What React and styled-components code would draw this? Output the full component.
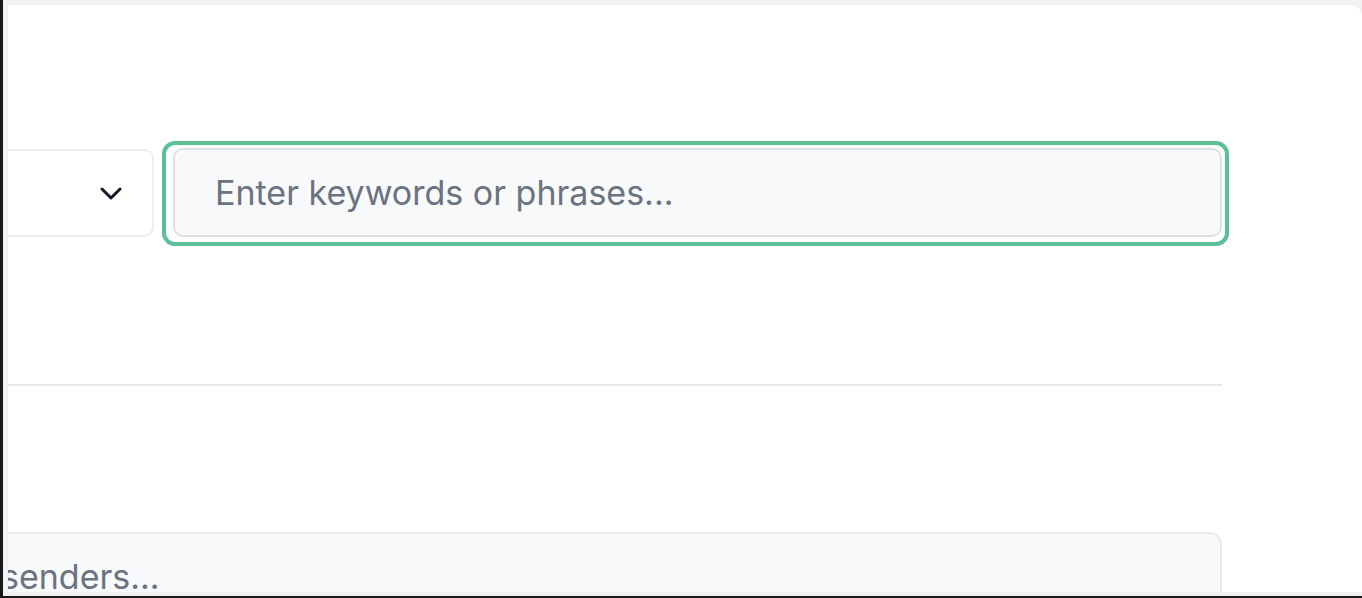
import React from "react";
import styled, { createGlobalStyle } from "styled-components";

const Global = createGlobalStyle`
  html, body { margin: 0; padding: 0; background: #181818; }
  body { font-family: Inter, "Noto Sans", Arial, sans-serif; }
  * { box-sizing: border-box; }
`;

const Root = styled.div`
  width: 1362px;
  height: 598px;
  background: #181818;
  padding: 0 0 2px 3px;
  display: flex;
`;

const Frame = styled.div`
  flex: 1;
  background: #f1f2f4;
  padding: 5px 0 4px 5px;
  display: flex;
`;

const Card = styled.div`
  flex: 1;
  background: #ffffff;
  border-top-right-radius: 12px;
  overflow: hidden;
  padding: 136px 140px 0 0;
`;

const Column = styled.div`
  margin-left: -130px;
  display: flex;
  flex-direction: column;
`;

const FilterRow = styled.div`
  display: flex;
  align-items: flex-start;
`;

const Select = styled.div`
  flex: 0 0 276px;
  height: 88px;
  margin-top: 8px;
  background: #ffffff;
  border: 2px solid #eceef1;
  border-radius: 10px;
  display: flex;
  align-items: center;
  justify-content: flex-end;
  padding-right: 30px;
  color: #111827;
`;

const FocusRing = styled.div`
  flex: 1;
  margin: 0 -7px 0 8px;
  border: 4px solid #5cc096;
  border-radius: 13px;
  padding: 3px 3px 5px 7px;
  display: flex;
`;

const TextInput = styled.input`
  flex: 1;
  min-width: 0;
  height: ${(p) => p.$h}px;
  background: #f8f9fb;
  border: 2px solid ${(p) => p.$border};
  border-radius: 10px;
  padding: 0 0 0 ${(p) => p.$pad}px;
  font-family: Inter, "Noto Sans", Arial, sans-serif;
  font-size: 34px;
  color: #374151;
  outline: none;
  &::placeholder {
    color: #6b7280;
    opacity: 1;
  }
`;

const Divider = styled.hr`
  margin: 138px 0 0 0;
  border: none;
  height: 2px;
  background: #e6e7ea;
`;

const BottomInput = styled(TextInput)`
  margin-top: 146px;
  flex: none;
  width: 100%;
  border-radius: 12px;
`;

const Chevron = () => (
  <svg width="22" height="13" viewBox="0 0 22 13" fill="none">
    <path d="M2 2 L11 11 L20 2" stroke="currentColor" strokeWidth="3" strokeLinecap="round" strokeLinejoin="round" />
  </svg>
);

export default function App() {
  return (
    <>
      <Global />
      <Root>
        <Frame>
          <Card>
            <Column>
              <FilterRow>
                <Select>
                  <Chevron />
                </Select>
                <FocusRing>
                  <TextInput $h={89} $border="#dfe0e5" $pad={40} placeholder="Enter keywords or phrases..." />
                </FocusRing>
              </FilterRow>
              <Divider />
              <BottomInput $h={88} $border="#e9eaed" $pad={121} placeholder="senders..." />
            </Column>
          </Card>
        </Frame>
      </Root>
    </>
  );
}
